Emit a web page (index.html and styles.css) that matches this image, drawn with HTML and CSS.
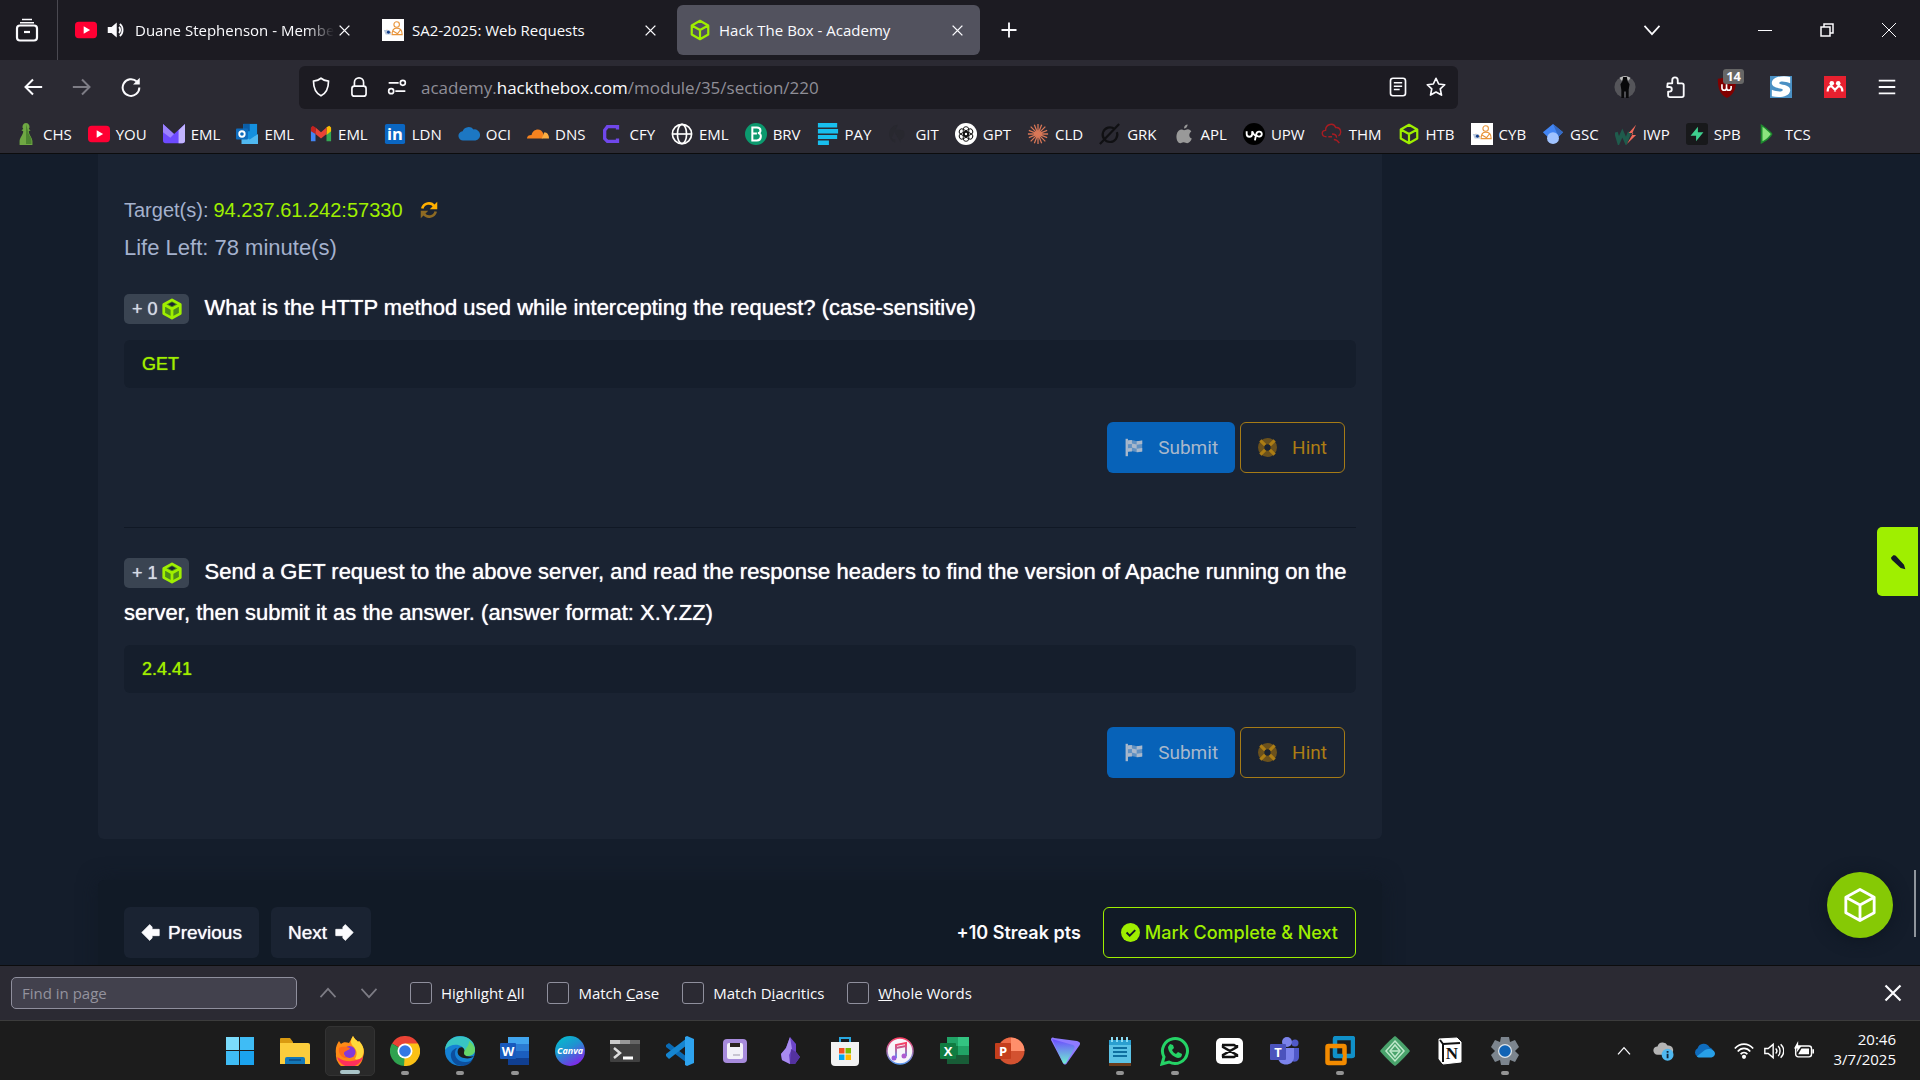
FILE: index.html
```html
<!DOCTYPE html>
<html lang="en">
<head>
  <meta charset="UTF-8">
  <meta name="viewport" content="width=device-width, initial-scale=1">
  <title>Hack The Box - Academy</title>
  <link rel="stylesheet" href="styles.css">
</head>
<body>

  <!-- shared icons -->
  <svg class="defs" aria-hidden="true">
    <symbol id="cube" viewBox="0 0 24 24"><path d="M12 2l9 5v10l-9 5-9-5V7zM3 7l9 5 9-5M12 12v10" fill="none" stroke="currentColor" stroke-width="2.4" stroke-linejoin="round"/></symbol>
    <symbol id="cube-solid" viewBox="0 0 24 24"><path d="M12 2l9 5v10l-9 5-9-5V7z" fill="#4d8a1c"/><path d="M12 2l9 5v10l-9 5-9-5V7zM3 7l9 5 9-5M12 12v10" fill="none" stroke="#9fef00" stroke-width="3" stroke-linejoin="round"/><path d="M12 4.500l4 2.200-4 2.200-4-2.200z" fill="#1a2332"/></symbol>
    <symbol id="close" viewBox="0 0 24 24"><path d="M3 3l18 18M21 3L3 21" fill="none" stroke="currentColor" stroke-width="2.600"/></symbol>
    <symbol id="youtube" viewBox="0 0 24 24"><rect x="0" y="3" width="24" height="18" rx="4" fill="#ff0033"/><path d="M9.500 8l7 4-7 4z" fill="#fff"/></symbol>
    <symbol id="course" viewBox="0 0 24 24"><path d="M0 0h24v24H0z" fill="#fff"/><g fill="none" stroke="#e8943a" stroke-width="1.200"><circle cx="16" cy="6" r="3"/><path d="M11 17c0-5 2-7 5-7s6 2 6 7zM12 13l5 3M20 12l-3 4M5 12l5 3"/></g><path d="M2 12h6l2 5H4z" fill="#b8c7dc"/><circle cx="7" cy="14.500" r="1.600" fill="#123e8a"/></symbol>
    <symbol id="flag" viewBox="0 0 24 24"><path d="M2 1h3v22H2z" fill="currentColor"/><path d="M5 3c6-2 10 3 18 0v14c-8 3-12-2-18 0z" fill="currentColor" opacity=".55"/><path d="M5 3l5-.5V7l6 1.300V4l7-1v4.500l-7 1v5l-6-1.500V7.500l-5 .5zM5 13l5-.5V17l-5 .5zM16 13.500l7-1V17l-7 1z" fill="currentColor"/></symbol>
    <symbol id="lifebuoy" viewBox="0 0 24 24"><circle cx="12" cy="12" r="8" fill="none" stroke="#6b511c" stroke-width="8"/><path d="M3 3l6 6M21 3l-6 6M3 21l6-6M21 21l-6-6" fill="none" stroke="currentColor" stroke-width="4"/></symbol>
    <symbol id="arrow" viewBox="0 0 24 24"><path d="M13 2l10 10-10 10-3-3V16H1V8h9V5z" fill="currentColor" stroke="currentColor" stroke-linejoin="round"/></symbol>
    <symbol id="chevron" viewBox="0 0 24 24"><path d="M3 7l9 10 9-10" fill="none" stroke="currentColor" stroke-width="2"/></symbol>
  </svg>

  <header class="browser">
    <div class="tabbar">
      <button class="icon-btn sidebar-btn" aria-label="View tabs"><svg viewBox="0 0 24 24"><g fill="none" stroke="currentColor" stroke-width="2.200"><rect x="2" y="7.500" width="20" height="15" rx="3"/><path d="M5 4.800h14M7 1.500h10" stroke-width="1.600"/><path d="M9 14h6"/></g></svg></button>
      <div class="tabs">
        <div class="tab">
          <svg class="fav"><use href="#youtube"/></svg>
          <svg class="sound" viewBox="0 0 24 24"><path d="M1 8h5l7-6v20l-7-6H1z" fill="currentColor"/><path d="M16 8c2 2 2 6 0 8M17 4c5 3 5 13 0 16" fill="none" stroke="currentColor" stroke-width="2.400"/></svg>
          <span class="tab-title fade">Duane Stephenson - Membe</span>
          <button class="icon-btn tab-close" aria-label="Close tab"><svg><use href="#close"/></svg></button>
        </div>
        <div class="tab">
          <svg class="fav"><use href="#course"/></svg>
          <span class="tab-title">SA2-2025: Web Requests</span>
          <button class="icon-btn tab-close" aria-label="Close tab"><svg><use href="#close"/></svg></button>
        </div>
        <div class="tab active">
          <svg class="fav lime"><use href="#cube"/></svg>
          <span class="tab-title">Hack The Box - Academy</span>
          <button class="icon-btn tab-close" aria-label="Close tab"><svg><use href="#close"/></svg></button>
        </div>
      </div>
      <button class="icon-btn new-tab" aria-label="New tab"><svg viewBox="0 0 24 24"><path d="M12 3v18M3 12h18" fill="none" stroke="currentColor" stroke-width="2.200"/></svg></button>
      <button class="icon-btn list-tabs" aria-label="List all tabs"><svg><use href="#chevron"/></svg></button>
      <div class="window-btns">
        <button class="icon-btn" aria-label="Minimize"><svg viewBox="0 0 14 14"><path d="M0 7.500h14" stroke="currentColor"/></svg></button>
        <button class="icon-btn" aria-label="Restore"><svg viewBox="0 0 14 14"><path d="M1 4h9v9H1zM4 4V1h9v9h-3" fill="none" stroke="currentColor" stroke-width="1.500"/></svg></button>
        <button class="icon-btn" aria-label="Close"><svg viewBox="0 0 14 14"><path d="M0 0l14 14M14 0L0 14" stroke="currentColor"/></svg></button>
      </div>
    </div>

    <div class="toolbar">
      <div class="nav-btns">
        <button class="icon-btn" aria-label="Back"><svg viewBox="0 0 24 24"><path d="M23 12H3M12 3l-9 9 9 9" fill="none" stroke="currentColor" stroke-width="2.400"/></svg></button>
        <button class="icon-btn dim" aria-label="Forward"><svg viewBox="0 0 24 24"><path d="M1 12h20M12 3l9 9-9 9" fill="none" stroke="currentColor" stroke-width="2.400"/></svg></button>
        <button class="icon-btn" aria-label="Reload"><svg viewBox="0 0 24 24"><path d="M19 5.500A10 10 0 1 0 22 12.500" fill="none" stroke="currentColor" stroke-width="2.400"/><path d="M22.500 1v8h-8z" fill="currentColor"/></svg></button>
      </div>
      <div class="urlbar">
        <svg viewBox="0 0 24 24"><path d="M12 1.500c3 2.500 6 3 9 3.500 0 8-2 14-9 17.500C5 19 3 13 3 5c3-.5 6-1 9-3.500z" fill="none" stroke="currentColor" stroke-width="2"/></svg>
        <svg viewBox="0 0 24 24"><rect x="3.500" y="11" width="17" height="12" rx="3" fill="none" stroke="currentColor" stroke-width="2"/><path d="M6.500 11V6.500a5.500 5.500 0 0 1 11 0V11" fill="none" stroke="currentColor" stroke-width="2"/></svg>
        <svg viewBox="0 0 24 24"><g fill="none" stroke="currentColor" stroke-width="2"><circle cx="19" cy="7" r="3"/><circle cx="5" cy="17" r="3"/><path d="M2 7h12M10 17h12"/></g></svg>
        <a class="url" href="#">academy.<b>hackthebox.com</b>/module/35/section/220</a>
        <svg viewBox="0 0 24 24"><rect x="3" y="1.500" width="18" height="21" rx="3" fill="none" stroke="currentColor" stroke-width="2"/><path d="M7 7h10M7 11h10M7 15h7" stroke="currentColor" stroke-width="1.800"/></svg>
        <svg viewBox="0 0 24 24"><path d="M12 1.500l3.200 6.900 7.300.9-5.400 5 1.500 7.400L12 18l-6.600 3.700 1.500-7.400-5.400-5 7.300-.9z" fill="none" stroke="currentColor" stroke-width="2" stroke-linejoin="round"/></svg>
      </div>
      <div class="extensions">
        <button class="icon-btn" aria-label="Account"><svg viewBox="0 0 24 24"><circle cx="12" cy="12" r="11.500" fill="#55555a"/><path d="M6 2a11 11 0 0 1 12 0l-2 3H8z" fill="#bbb"/><path d="M10 1h4l1 5 2 3-1 6v9h-3v-7h-2v7H8v-9L7 9l2-3z" fill="#08080a"/></svg></button>
        <button class="icon-btn" aria-label="Extensions"><svg viewBox="0 0 24 24"><path d="M4 8h5V4.500a3 3 0 0 1 6 0V8h4.500a2 2 0 0 1 2 2v11a2 2 0 0 1-2 2h-13a2 2 0 0 1-2-2v-4H6a2.500 2.500 0 0 0 0-5H3.500z" fill="none" stroke="currentColor" stroke-width="2" stroke-linejoin="round"/></svg></button>
        <button class="icon-btn addon" aria-label="uBlock"><svg viewBox="0 0 24 24"><path d="M12 0c3 2 7 3 10 3 0 10-2 17-10 21C4 20 2 13 2 3c3 0 7-1 10-3z" fill="#800000"/><path d="M6.500 9v4a2.500 2.500 0 0 0 5 0V9v4a2.500 2.500 0 0 0 5 0v-2" fill="none" stroke="#fff" stroke-width="1.800"/></svg><span class="badge">14</span></button>
        <button class="icon-btn addon" aria-label="Scribbr"><svg viewBox="0 0 24 24"><path d="M0 0h24v24H0z" fill="#4a90c4"/><path d="M22 1v7c-5-2-12-3-12 0 0 2 13 1 12 8-1 7-12 8-20 6v-7c5 2 12 3 12 0 0-2-13-1-12-8C3 1 13-1 22 1z" fill="#fff"/></svg></button>
        <button class="icon-btn addon" aria-label="Mendeley"><svg viewBox="0 0 24 24"><path d="M0 0h24v24H0z" fill="#e8202f"/><circle cx="8.500" cy="8" r="2.500" fill="#fff"/><circle cx="15.500" cy="8" r="2.500" fill="#fff"/><path d="M4 17c0-4 1-6 4-6l4 4 4-4c3 0 4 2 4 6M12 13v4" fill="none" stroke="#fff" stroke-width="2.400"/></svg></button>
        <button class="icon-btn" aria-label="Menu"><svg viewBox="0 0 24 24"><path d="M3 5h18M3 12h18M3 19h18" stroke="currentColor" stroke-width="2"/></svg></button>
      </div>
    </div>

    <nav class="bookmarks">
      <a href="#"><svg viewBox="0 0 24 24"><path d="M12 0a4 4 0 0 1 3 6.500l2 1.500-2 1c0 4 4 7 4 11v4H5v-4c0-4 4-7 4-11L7 8l2-1.500A4 4 0 0 1 12 0z" fill="#6fa843"/><path d="M12 1v22h6v-4c0-4-4-6-4-11z" fill="#4c8430"/></svg>CHS</a>
      <a href="#"><svg><use href="#youtube"/></svg>YOU</a>
      <a href="#"><svg viewBox="0 0 24 24"><path d="M0 1l12 11L24 1v18a3 3 0 0 1-3 3H3a3 3 0 0 1-3-3z" fill="#6d4aff"/><path d="M24 1v18a3 3 0 0 1-3 3h-4V8z" fill="#c3b5ff"/><path d="M0 1l12 11-4 4-8-6z" fill="#9c82ff"/></svg>EML</a>
      <a href="#"><svg viewBox="0 0 24 24"><path d="M8 1h15v21H8z" fill="#1490df"/><path d="M8 1h7v8H8z" fill="#0a5ea8"/><path d="M6 13l9 5 9-6v11H6z" fill="#50b8f0"/><rect y="6" width="13" height="12" rx="1" fill="#0f6cbd"/><circle cx="6.500" cy="12" r="3" fill="none" stroke="#fff" stroke-width="2"/></svg>EML</a>
      <a href="#"><svg viewBox="0 0 24 24"><path d="M1 6v14h5V9z" fill="#4285f4"/><path d="M23 6v14h-5V9z" fill="#34a853"/><path d="M18 4.500l3-1.500 2 2v4l-5 4z" fill="#fbbc04"/><path d="M6 5l6 5 6-5v7l-6 5-6-5z" fill="#ea4335"/><path d="M1 5l2-2 3 2v7L1 9z" fill="#c5221f"/></svg>EML</a>
      <a href="#"><svg viewBox="0 0 24 24"><rect x="1" y="1" width="22" height="22" rx="2" fill="#0a66c2"/><text x="12" y="19" text-anchor="middle" font-size="18" font-weight="700" fill="#fff">in</text></svg>LDN</a>
      <a href="#"><svg viewBox="0 0 24 24"><path d="M6 19a5 5 0 0 1-1-10 7 7 0 0 1 12-2 6 6 0 0 1 2 12z" fill="#1c77c3"/></svg>OCI</a>
      <a href="#"><svg viewBox="0 0 24 24"><path d="M0 17c0-3 2-4 5-4 1-6 10-9 13-1l-1 5z" fill="#f6821f"/><path d="M16 17l3-7c3 0 5 3 5 7z" fill="#fbad41"/></svg>DNS</a>
      <a href="#"><svg viewBox="0 0 24 24"><path d="M18 7V4H7L4 8v9l3 3h11v-3" fill="none" stroke="#7047eb" stroke-width="3.600"/></svg>CFY</a>
      <a href="#"><svg viewBox="0 0 24 24"><g fill="none" stroke="#fff" stroke-width="1.800"><circle cx="12" cy="12" r="10.500"/><ellipse cx="12" cy="12" rx="5" ry="10.500"/><path d="M1.500 12h21"/></g></svg>EML</a>
      <a href="#"><svg viewBox="0 0 24 24"><circle cx="12" cy="12" r="12" fill="#0b996e"/><path d="M8 5h5c5 0 5 6 1 6 5 0 4 8-1 8H8zM8 11.500h5" fill="none" stroke="#fff" stroke-width="2.200"/></svg>BRV</a>
      <a href="#"><svg viewBox="0 0 24 24"><path d="M1 0h21v5H1zM1 6.500h22v5H1zM1 13h21v4.500H1zM1 19h12v5H1z" fill="#18bfee"/></svg>PAY</a>
      <a href="#"><svg viewBox="0 0 24 24"><path d="M12 2a10 10 0 0 0-3 19.500V18c-3 .5-4-2-4-2M15 21.500V18c5-1 5-9 2-10-3-1-7-1-10 0" fill="#28282f"/></svg>GIT</a>
      <a href="#"><svg viewBox="0 0 24 24"><circle cx="12" cy="12" r="12" fill="#fff"/><g fill="none" stroke="#111" stroke-width="1"><rect x="9" y="4" width="6" height="10" rx="3"/><rect x="9" y="4" width="6" height="10" rx="3" transform="rotate(60 12 12)"/><rect x="9" y="4" width="6" height="10" rx="3" transform="rotate(120 12 12)"/><rect x="9" y="4" width="6" height="10" rx="3" transform="rotate(180 12 12)"/><rect x="9" y="4" width="6" height="10" rx="3" transform="rotate(240 12 12)"/><rect x="9" y="4" width="6" height="10" rx="3" transform="rotate(300 12 12)"/></g></svg>GPT</a>
      <a href="#"><svg viewBox="0 0 24 24"><path d="M12 1v22M1 12h22M4 4l16 16M20 4L4 20M8 2l8 20M2 8l20 8M22 8L2 16M16 2L8 22" stroke="#d97757" stroke-width="1.400"/></svg>CLD</a>
      <a href="#"><svg viewBox="0 0 24 24"><path d="M17 6.500A8 8 0 1 0 19.500 10M1 23L22 1" fill="none" stroke="#101013" stroke-width="2.400"/></svg>GRK</a>
      <a href="#"><svg viewBox="0 0 24 24"><path d="M12 8c2 0 3-1.500 5-1 1.500 0 2 1 3 2-3 2.500-3 6.500.5 8-1 3-3 5-5 5-1.500 0-2-1-4-1s-2 1-3.500 1C5 22 3 17 4 12.500 5 8 9 6 12 8zM12 6c0-3 2-4.500 4-4.500 0 2.500-2 4.500-4 4.500z" fill="#999"/></svg>APL</a>
      <a href="#"><svg viewBox="0 0 24 24"><circle cx="12" cy="12" r="12" fill="#000"/><path d="M4 9v3a3 3 0 0 0 6 0V9c1 3 3 5 5 6M13 19l1.500-7c1-4 6-3 6 0s-4 4-6 1" fill="none" stroke="#fff" stroke-width="2"/></svg>UPW</a>
      <a href="#"><svg viewBox="0 0 24 24"><path d="M6 15c-6 0-6-7-1-7 0-7 9-9 11-3 6-1 7 7 3 9M12 12c3 0 5 1 5 4M14 18c3 0 4 1 6 4M8 15h4" fill="none" stroke="#a81c22" stroke-width="1.500"/></svg>THM</a>
      <a href="#"><svg class="lime"><use href="#cube"/></svg>HTB</a>
      <a href="#"><svg><use href="#course"/></svg>CYB</a>
      <a href="#"><svg viewBox="0 0 24 24"><path d="M12 1l11 9-5 5H6l-5-5z" fill="#4285f4"/><path d="M12 1l11 9-5 5z" fill="#356ac3"/><circle cx="12" cy="16.500" r="6.500" fill="#a0c3ff"/></svg>GSC</a>
      <a href="#"><svg viewBox="0 0 24 24"><path d="M1 10l3 10 4-9 4 9 4-10" fill="none" stroke="#1f5b4c" stroke-width="4"/><path d="M23 2l-8 9h5l-7 12 10-10h-5z" fill="#f26a5a"/></svg>IWP</a>
      <a href="#"><svg viewBox="0 0 24 24"><rect width="24" height="24" rx="3" fill="#18191b"/><path d="M13 4v6h6l-8 10v-6H5z" fill="#3ecf8e"/></svg>SPB</a>
      <a href="#"><svg viewBox="0 0 24 24"><path d="M4 1c6 4 11 8 13 11-2 4-7 8-13 11z" fill="#1d8a2e"/><path d="M6 4c4 3 7 6 9 8-2 3-5 6-9 8z" fill="#8be37e"/></svg>TCS</a>
    </nav>
  </header>

  <main class="page">
    <section class="card questions">
      <p class="target">Target(s): <a href="#">94.237.61.242:57330</a>
        <svg viewBox="0 0 24 24"><path d="M3 10a9 9 0 0 1 16-3" fill="none" stroke="#ffaf00" stroke-width="3.500"/><path d="M23 1v10H13z" fill="#ffaf00"/><path d="M21 14a9 9 0 0 1-16 3" fill="none" stroke="#8d6a23" stroke-width="3.500"/><path d="M1 23V13h10z" fill="#8d6a23"/></svg></p>
      <p class="target life">Life Left: 78 minute(s)</p>

      <form class="question">
        <label for="answer1"><span class="points">+ 0<svg><use href="#cube-solid"/></svg></span>What is the HTTP method used while intercepting the request? (case-sensitive)</label>
        <input id="answer1" type="text" value="GET">
        <div class="actions">
          <button type="button" class="btn submit"><svg><use href="#flag"/></svg>Submit</button>
          <button type="button" class="btn hint"><svg><use href="#lifebuoy"/></svg>Hint</button>
        </div>
      </form>
      <hr>
      <form class="question">
        <label for="answer2"><span class="points">+ 1<svg><use href="#cube-solid"/></svg></span>Send a GET request to the above server, and read the response headers to find the version of Apache running on the server, then submit it as the answer. (answer format: X.Y.ZZ)</label>
        <input id="answer2" type="text" value="2.4.41">
        <div class="actions">
          <button type="button" class="btn submit"><svg><use href="#flag"/></svg>Submit</button>
          <button type="button" class="btn hint"><svg><use href="#lifebuoy"/></svg>Hint</button>
        </div>
      </form>
    </section>

    <section class="card pager">
      <button class="btn step"><svg class="flip"><use href="#arrow"/></svg>Previous</button>
      <button class="btn step">Next<svg><use href="#arrow"/></svg></button>
      <strong class="streak">+10 Streak pts</strong>
      <button class="btn complete"><svg viewBox="0 0 24 24"><circle cx="12" cy="12" r="12" fill="#9fef00"/><path d="M7 12l4 4 7-7" fill="none" stroke="#111927" stroke-width="2.400"/></svg>Mark Complete &amp; Next</button>
    </section>

    <button class="edit-tab" aria-label="Notes"><svg viewBox="0 0 24 24"><path d="M2 5l3-3c3-1 4 1 5 2l11 12 2 7-7-2L3 9C2 8 1 6 2 5z" fill="#111927"/></svg></button>
    <button class="fab" aria-label="Open menu"><svg viewBox="0 0 24 24"><path d="M12 1l10 5.500v11L12 23 2 17.500v-11zM2 6.500L12 12l10-5.500M12 12v11" fill="none" stroke="#fff" stroke-width="2" stroke-linejoin="round"/></svg></button>
    <div class="scroll-thumb"></div>
  </main>

  <div class="findbar">
    <input class="find-input" type="text" placeholder="Find in page" aria-label="Find in page">
    <button class="icon-btn find-step dim" aria-label="Previous match"><svg class="up"><use href="#chevron"/></svg></button>
    <button class="icon-btn find-step dim" aria-label="Next match"><svg><use href="#chevron"/></svg></button>
    <div class="find-options">
      <label><input type="checkbox"><span>Highlight <u>A</u>ll</span></label>
      <label><input type="checkbox"><span>Match <u>C</u>ase</span></label>
      <label><input type="checkbox"><span>Match D<u>i</u>acritics</span></label>
      <label><input type="checkbox"><span><u>W</u>hole Words</span></label>
    </div>
    <button class="icon-btn find-close" aria-label="Close find bar"><svg><use href="#close"/></svg></button>
  </div>

  <footer class="taskbar">
    <div class="apps">
      <button class="app" aria-label="Start"><svg viewBox="0 0 30 30"><path d="M1 1h13v13H1zM15 1h14v13H15zM1 15h13v14H1zM15 15h14v14H15z" fill="#3fbcf5"/><path d="M1 1h13v13H1z" fill="#7bdcfb"/><path d="M15 15h14v14H15z" fill="#1ba3ee"/></svg></button>
      <button class="app" aria-label="Explorer"><svg viewBox="0 0 30 30"><path d="M0 3a1 1 0 0 1 1-1h9l3 4v4H0z" fill="#d99a11"/><path d="M0 7h28a2 2 0 0 1 2 2v19H0z" fill="#fccd3c"/><path d="M5 28v-5a2 2 0 0 1 2-2h16a2 2 0 0 1 2 2v5z" fill="#1478b8"/><path d="M9 24h12" stroke="#0c4a80" stroke-width="1.500"/></svg></button>
      <button class="app current" aria-label="Firefox"><svg viewBox="0 0 30 30"><path d="M18 0c2 4 4 4 5 6l1-1c5 5 6 11 4 16a13.500 13.500 0 0 1-27-3C0 12 2 8 4 5l2 3c2-2 5-2 8-1z" fill="#ff8a16"/><path d="M18 0c2 4 4 4 5 6l1-1c5 5 6 11 3 16-2 3-5 3-7 2 4-7 0-11-3-14-2-3-1-6 1-9z" fill="#ffd93b"/><path d="M2 21a13.500 13.500 0 0 0 26 0c-7 5-18 6-26 0z" fill="#ff2f5c"/><circle cx="14.500" cy="16" r="6" fill="#8338d8"/><path d="M4 12c4-2 7-1 11 0-1 3-5 2-6 5-1 2 1 4 4 5-6 1-10-4-9-10z" fill="#ff6a1a"/></svg></button>
      <button class="app open" aria-label="Chrome"><svg viewBox="0 0 30 30"><path d="M15 15L2 7.500a15 15 0 0 1 26 0z" fill="#ea4335"/><path d="M15 15L2 7.500A15 15 0 0 0 15 30l6-11z" fill="#2fa24f"/><path d="M15 15l-1 15A15 15 0 0 0 28 7.500H15z" fill="#fbc116"/><circle cx="15" cy="15" r="7.500" fill="#fff"/><circle cx="15" cy="15" r="5.800" fill="#3478e5"/></svg></button>
      <button class="app open" aria-label="Edge"><svg viewBox="0 0 30 30"><circle cx="15" cy="15" r="15" fill="#1581d4"/><path d="M0 14C1-4 29-4 30 13c0 5-4 7-8 7-5 0-5-3-3-5 1-6-12-10-19-1z" fill="#38c6c3"/><path d="M24 5c4 3 6 6 6 9 0 5-5 6-9 6-3-1-3-3-2-5 2-3 5-5 5-10z" fill="#65d66a"/><path d="M12 12c-5 6 0 15 9 14 3 0 5-1 7-3-4 9-17 9-21 1-3-6 0-11 5-12z" fill="#0c4f9e"/><path d="M14 12c-3 4-1 9 5 10 4 1 8 0 10-2-3 1-10 1-10-3 0-2 1-2 0-4-1-2-3-2-5-1z" fill="#1c1c1c"/></svg></button>
      <button class="app open" aria-label="Word"><svg viewBox="0 0 30 30"><path d="M8 1h21v28H8z" fill="#1b5ebe"/><path d="M8 1h21v7H8z" fill="#41a5ee"/><path d="M8 8h21v7H8z" fill="#2b7cd3"/><path d="M8 22h21v7H8z" fill="#103f91"/><rect y="7" width="16" height="16" rx="1" fill="#185abd"/><text x="8" y="20" text-anchor="middle" font-size="13" font-weight="700" fill="#fff">W</text></svg></button>
      <button class="app" aria-label="Canva"><svg viewBox="0 0 30 30"><defs><linearGradient id="canva" x1="0" y1="0" x2=".6" y2="1"><stop offset="0" stop-color="#00c4cc"/><stop offset=".5" stop-color="#1f93d0"/><stop offset="1" stop-color="#7d2ae8"/></linearGradient></defs><circle cx="15" cy="15" r="15" fill="url(#canva)"/><text x="15" y="18" text-anchor="middle" font-size="9" font-style="italic" font-weight="700" fill="#fff">Canva</text></svg></button>
      <button class="app" aria-label="Terminal"><svg viewBox="0 0 30 30"><rect y="4" width="30" height="22" rx="1" fill="#404040"/><path d="M0 4h20v4H0z" fill="#ccc"/><path d="M10 4h10v4H10z" fill="#999"/><path d="M20 4h10v4H20z" fill="#666"/><path d="M4 12l6 5-6 5" fill="none" stroke="#ddd" stroke-width="2.500"/><path d="M13 22h10" stroke="#fff" stroke-width="3"/></svg></button>
      <button class="app" aria-label="Code"><svg viewBox="0 0 30 30"><path d="M1 9l3-2 18 14v6L1 11z" fill="#0a6bb5"/><path d="M1 20l3 3L22 9V2L1 18z" fill="#1585d0"/><path d="M22 0l7 3v24l-7 3-2-1V1z" fill="#2ea3ee"/></svg></button>
      <button class="app" aria-label="Disk tool"><svg viewBox="0 0 30 30"><rect x="3" y="3" width="24" height="24" rx="4" fill="#a78bdc"/><rect x="7" y="7" width="16" height="16" rx="2" fill="#f2f0f8"/><path d="M10 7h10v4H10z" fill="#2b2320"/><path d="M13 19h7" stroke="#c8c4d2" stroke-width="2"/></svg></button>
      <button class="app" aria-label="Obsidian"><svg viewBox="0 0 30 30"><path d="M15 1l6 7v8l4 5-5 7h-5l-8-4-1-6 5-6z" fill="#6c45c9"/><path d="M15 1l2 12-3 6 1 9-8-4-1-6 5-6z" fill="#a88bf0"/><path d="M16 13l5 3 4 5-5 7h-5z" fill="#54329f"/></svg></button>
      <button class="app" aria-label="Store"><svg viewBox="0 0 30 30"><path d="M10 7V2h10v5" fill="none" stroke="#29a8e0" stroke-width="2"/><path d="M1 6h28v20a4 4 0 0 1-4 4H5a4 4 0 0 1-4-4z" fill="#f2f2f2"/><path d="M9 12h5.500v5.500H9z" fill="#f25022"/><path d="M15.500 12H21v5.500h-5.500z" fill="#7fba00"/><path d="M9 18.500h5.500V24H9z" fill="#00a4ef"/><path d="M15.500 18.500H21V24h-5.500z" fill="#ffb900"/></svg></button>
      <button class="app" aria-label="Music"><svg viewBox="0 0 30 30"><defs><linearGradient id="music" x1="0" y1="0" x2="0" y2="1"><stop offset="0" stop-color="#fa3e62"/><stop offset="1" stop-color="#5b9cf5"/></linearGradient></defs><circle cx="15" cy="15" r="13" fill="#f7f5fa" stroke="url(#music)" stroke-width="1.500"/><path d="M11 22V9l10-2v13M11 12l10-2" fill="none" stroke="url(#music)" stroke-width="2"/><circle cx="9" cy="22" r="2.500" fill="#9a5be0"/><circle cx="19" cy="20" r="2.500" fill="#b05bd0"/></svg></button>
      <button class="app" aria-label="Excel"><svg viewBox="0 0 30 30"><path d="M7 1h22v27H7z" fill="#21a366"/><path d="M18 1h11v9H18z" fill="#33c481"/><path d="M7 10h11v9H7z" fill="#107c41"/><path d="M7 19h22v9H7z" fill="#185c37"/><rect y="7" width="16" height="16" rx="1" fill="#107c41"/><text x="8" y="20" text-anchor="middle" font-size="13" font-weight="700" fill="#fff">X</text></svg></button>
      <button class="app" aria-label="PowerPoint"><svg viewBox="0 0 30 30"><circle cx="16" cy="15" r="13.500" fill="#d35230"/><path d="M16 1.500A13.500 13.500 0 0 1 29.500 15H16z" fill="#ff8f6b"/><path d="M16 1.500V15H3A13.500 13.500 0 0 1 16 1.500z" fill="#ed6c47"/><rect y="7" width="16" height="16" rx="1" fill="#c43e1c"/><text x="8" y="20" text-anchor="middle" font-size="13" font-weight="700" fill="#fff">P</text></svg></button>
      <button class="app" aria-label="VPN"><svg viewBox="0 0 30 30"><defs><linearGradient id="vpn" x1="0" y1="0" x2="0" y2="1"><stop offset="0" stop-color="#6d4aff"/><stop offset="1" stop-color="#6ff0d0"/></linearGradient></defs><path d="M1 4c0-2 1-3 3-2l23 3c3 1 4 2 2 5L17 27c-1 2-3 2-4 0z" fill="#8f7bff"/><path d="M2 3l21 6c2 1 2 2 1 4l-8 14c-1 1-2 1-3 0z" fill="url(#vpn)"/></svg></button>
      <button class="app open" aria-label="Notepad"><svg viewBox="0 0 30 30"><path d="M4 27h22v3H4z" fill="#6b3c1c"/><path d="M4 4h22v23H4z" fill="#5cc3e6"/><path d="M4 4h22v5H4z" fill="#2b9fd0"/><path d="M7 1v5M12 1v5M17 1v5M22 1v5" stroke="#8adcf5" stroke-width="2"/><path d="M8 12h14M8 16h14M8 20h14" stroke="#0e6fa0" stroke-width="2"/></svg></button>
      <button class="app open" aria-label="WhatsApp"><svg viewBox="0 0 30 30"><path d="M2 28l2-7A12.500 12.500 0 1 1 9 26z" fill="none" stroke="#25d366" stroke-width="3"/><path d="M10 8l3 1 1 3-2 2c1 2 2 3 4 4l2-2 4 2c0 3-2 4-4 4-5-1-10-6-10-11z" fill="#25d366"/></svg></button>
      <button class="app" aria-label="CapCut"><svg viewBox="0 0 30 30"><rect x="1" y="2" width="27" height="26" rx="5" fill="#fff"/><path d="M7 9h12l3 2M7 21h12l3-2M22 9v2L8 19v2M8 9v2l14 8v2" fill="none" stroke="#111" stroke-width="2.400"/></svg></button>
      <button class="app" aria-label="Teams"><svg viewBox="0 0 30 30"><circle cx="25" cy="7" r="3.500" fill="#5059c9"/><circle cx="17" cy="6" r="5" fill="#7b83eb"/><path d="M21 12h8v9c0 5-6 6-8 3z" fill="#5059c9"/><path d="M8 12h16v9c0 10-16 10-16 0z" fill="#7b83eb"/><rect y="8" width="16" height="16" rx="1" fill="#4b53bc"/><text x="8" y="21" text-anchor="middle" font-size="13" font-weight="700" fill="#fff">T</text></svg></button>
      <button class="app open" aria-label="VMware"><svg viewBox="0 0 30 30"><rect x="10" y="2" width="18" height="18" rx="1" fill="none" stroke="#1090c8" stroke-width="4.500"/><rect x="2.500" y="10" width="17" height="17" rx="1" fill="none" stroke="#f38b00" stroke-width="4.500"/><path d="M10 15v5h8" fill="none" stroke="#1090c8" stroke-width="3"/></svg></button>
      <button class="app" aria-label="Diamond app"><svg viewBox="0 0 30 30"><path d="M15 0c3 2 12 11 15 15-3 4-12 13-15 15C12 28 3 19 0 15 3 11 12 2 15 0z" fill="#4aa36c"/><path d="M15 5l9 10-9 10-9-10zM15 9l5 6-5 6-5-6z" fill="none" stroke="#bfe8cb" stroke-width="1.500"/><path d="M11 15h8" stroke="#bfe8cb" stroke-width="1.500"/></svg></button>
      <button class="app" aria-label="Notion"><svg viewBox="0 0 30 30"><path d="M4 3l18-1 4 4v20l-18 2-4-5z" fill="#fff" stroke="#fff" stroke-linejoin="round"/><path d="M5 4l3 4v18M8 8l17-1" fill="none" stroke="#111" stroke-width="2"/><text class="serif" x="17" y="23" text-anchor="middle" font-size="17" font-weight="700" fill="#111">N</text></svg></button>
      <button class="app open" aria-label="Settings"><svg viewBox="0 0 30 30"><path d="M11 1h8l1 5 5-2 4 7-4 4 4 4-4 7-5-2-1 5h-8l-1-5-5 2-4-7 4-4-4-4 4-7 5 2z" fill="#7c858e"/><circle cx="15" cy="15" r="7" fill="#dfe6ec"/><circle cx="15" cy="15" r="5.800" fill="#1063b5"/></svg></button>
    </div>
    <div class="tray">
      <svg class="up small"><use href="#chevron"/></svg>
      <svg class="wide" viewBox="0 0 24 24"><path d="M6 16a4.500 4.500 0 0 1 0-9 6 6 0 0 1 11-1 5 5 0 0 1 2 10z" fill="#b4b4b4"/><circle cx="17" cy="16" r="6.500" fill="#4fb8f0"/><path d="M17 15v5M17 12v2" stroke="#10263a" stroke-width="2"/></svg>
      <svg class="wide" viewBox="0 0 24 24"><path d="M5 18a5 5 0 0 1 0-9 7 7 0 0 1 13-1 5.500 5.500 0 0 1 1 10z" fill="#0f6cbd"/><path d="M4 18l9-7c5-3 11 0 11 4 0 2-2 4-4 4H6z" fill="#28a0e8"/></svg>
      <div class="status">
        <svg viewBox="0 0 24 24"><g fill="none" stroke="#fff" stroke-width="2"><path d="M1 9c6-7 16-7 22 0M4.500 12.500c4-5 11-5 15 0M8 16c2-3 6-3 8 0"/></g><circle cx="12" cy="19" r="2.500" fill="#fff"/></svg>
        <svg viewBox="0 0 24 24"><path d="M1 9h4l6-5v16l-6-5H1zM14 9c2 2 2 4 0 6M17 6c3 3 3 9 0 12M20 4c5 5 5 11 0 16" fill="none" stroke="#fff" stroke-width="1.700"/></svg>
        <svg viewBox="0 0 24 24"><rect x="2" y="6" width="19" height="13" rx="3" fill="none" stroke="#fff" stroke-width="1.700"/><path d="M9 9h9v7H5z" fill="#fff"/><path d="M22 10h2v5h-2zM5 0L0 9h4l-1 5 6-8H5z" fill="#fff"/></svg>
      </div>
      <time class="clock">20:46<br>3/7/2025</time>
    </div>
  </footer>

</body>
</html>
```
FILE: styles.css
```css
* {
  box-sizing: border-box;
}
body {
  margin: 0;
  height: 100vh;
  display: flex;
  flex-direction: column;
  overflow: hidden;
  background: #141d2b;
  color: #fbfbfe;
  font-family: "Open Sans", "Noto Sans", sans-serif;
  font-size: 15px;
}
button, input {
  font: inherit;
  color: inherit;
}
button {
  border: 0;
  padding: 0;
  background: none;
}
a {
  color: inherit;
  text-decoration: none;
}
svg {
  display: block;
  flex: none;
}
.defs {
  position: absolute;
  width: 0;
  height: 0;
}
.lime {
  color: #9fef00;
}
.dim {
  color: #7d7c85;
}
.up {
  transform: rotate(180deg);
}
.flip {
  transform: scaleX(-1);
}
.icon-btn {
  display: flex;
  align-items: center;
  justify-content: center;
}

/* tab strip */
.tabbar {
  display: flex;
  align-items: center;
  height: 60px;
  background: #1c1b22;
}
.sidebar-btn {
  width: 58px;
  height: 60px;
  border-right: 1px solid #4a4951;
  padding-right: 4px;
}
.sidebar-btn svg {
  width: 24px;
  height: 24px;
}
.tabs {
  display: flex;
  gap: 4px;
  margin-left: 5px;
}
.tab {
  display: flex;
  align-items: center;
  width: 303px;
  height: 50px;
  padding: 0 12px;
  border-radius: 6px;
}
.tab.active {
  background: #52525e;
}
.fav {
  width: 22px;
  height: 22px;
  margin-right: 8px;
}
.sound {
  width: 18px;
  height: 18px;
  margin: 0 10px 0 2px;
}
.tab-title {
  flex: 1;
  white-space: nowrap;
}
.tab-title.fade {
  mask-image: linear-gradient(to right, #000 86%, transparent);
}
.tab-close {
  width: 22px;
  height: 22px;
}
.tab-close svg {
  width: 13px;
  height: 13px;
}
.new-tab {
  width: 58px;
}
.new-tab svg,
.list-tabs svg {
  width: 20px;
  height: 20px;
}
.list-tabs {
  margin-left: auto;
  width: 60px;
}
.window-btns {
  display: flex;
  margin-left: 52px;
}
.window-btns button {
  width: 62px;
  height: 60px;
}
.window-btns svg {
  width: 14px;
  height: 14px;
}

/* address bar */
.toolbar {
  display: flex;
  align-items: center;
  height: 54px;
  background: #2b2a33;
}
.nav-btns {
  display: flex;
  width: 299px;
  padding-left: 8px;
}
.nav-btns button {
  width: 49px;
}
.nav-btns svg,
.urlbar svg {
  width: 20px;
  height: 20px;
}
.urlbar {
  flex: 1;
  display: flex;
  align-items: center;
  gap: 18px;
  height: 43px;
  padding: 0 12px;
  border-radius: 6px;
  background: #1c1b22;
}
.url {
  flex: 1;
  margin-left: -4px;
  font-size: 17px;
  color: #8f8e97;
}
.url b {
  font-weight: 400;
  color: #fbfbfe;
}
.extensions {
  display: flex;
  margin-left: 142px;
  padding-right: 8px;
}
.extensions button {
  width: 50px;
  height: 40px;
}
.extensions .addon {
  position: relative;
  width: 54px;
}
.extensions svg {
  width: 22px;
  height: 22px;
}
.badge {
  position: absolute;
  top: 2px;
  right: 10px;
  padding: 0 3px;
  border-radius: 3px;
  background: #666;
  font-size: 13px;
  font-weight: 700;
  line-height: 15px;
}

/* bookmarks */
.bookmarks {
  display: flex;
  align-items: center;
  gap: 16px;
  height: 40px;
  padding-left: 15px;
  background: #2b2a33;
  border-bottom: 1px solid #0c0c0d;
}
.bookmarks a {
  display: flex;
  align-items: center;
  gap: 6px;
}
.bookmarks svg {
  width: 22px;
  height: 22px;
}

/* module page */
.page {
  position: relative;
  flex: 1;
  min-height: 0;
  overflow: hidden;
  padding: 0 538px 0 98px;
  font-family: "Liberation Sans", Arial, sans-serif;
  font-size: 20px;
}
.card {
  padding: 0 26px;
}
.questions {
  padding-top: 37px;
  padding-bottom: 61px;
  border-radius: 0 0 6px 6px;
  background: #1a2332;
}
.target {
  display: flex;
  align-items: center;
  gap: 5px;
  margin: 0;
  line-height: 38px;
  color: #a4b1cd;
}
.target a {
  color: #9fef00;
}
.target svg {
  width: 18px;
  height: 18px;
  margin-left: 12px;
}
.life {
  font-size: 22px;
}
.question {
  padding-top: 20px;
}
.question label {
  display: block;
  line-height: 41px;
  font-size: 22px;
  color: #fff;
}
.points {
  display: inline-flex;
  align-items: center;
  gap: 3px;
  height: 30px;
  margin-right: 16px;
  padding: 0 6px 0 8px;
  border-radius: 5px;
  background: #3a4452;
  color: #d5dbe5;
  font-size: 18px;
  line-height: 30px;
  vertical-align: middle;
}
.points svg {
  width: 22px;
  height: 22px;
}
.question input {
  display: block;
  width: 100%;
  height: 48px;
  margin-top: 12px;
  padding: 0 18px;
  border: 0;
  border-radius: 6px;
  background: #151e2c;
  color: #9fef00;
  font-size: 18px;
}
.question label,
.question input,
.step {
  text-shadow: 0 0 1px currentColor;
}
.actions {
  display: flex;
  justify-content: flex-end;
  gap: 5px;
  margin-top: 34px;
  padding-right: 11px;
}
.btn {
  display: flex;
  align-items: center;
  height: 51px;
  padding: 0 17px;
  border-radius: 6px;
  font-size: 19px;
}
.btn svg {
  width: 19px;
  height: 19px;
}
.actions .btn {
  font-family: Roboto, sans-serif;
}
.actions svg {
  margin-right: 15px;
}
.submit {
  background: #0762b8;
  color: #a9b8cb;
}
.hint {
  border: 1px solid #a67b16;
  color: #ac7d14;
}
hr {
  margin: 54px 0 3px;
  border: 0;
  border-top: 1px solid #101825;
}
.pager {
  display: flex;
  align-items: center;
  gap: 12px;
  margin-top: 41px;
  padding-top: 27px;
  padding-bottom: 27px;
  border-radius: 6px;
  background: #111a26;
  box-shadow: 0 0 20px #111a26;
}
.step {
  gap: 8px;
  background: #1a2332;
}
.streak {
  margin-left: auto;
  margin-right: 10px;
  font-family: Inter, sans-serif;
  font-size: 18px;
  font-weight: 600;
}
.complete {
  gap: 5px;
  border: 1px solid #9fef00;
  color: #9fef00;
  font-family: Inter, sans-serif;
  font-size: 18px;
  font-weight: 500;
}
.edit-tab {
  position: absolute;
  top: 373px;
  right: 2px;
  display: flex;
  align-items: center;
  justify-content: center;
  width: 41px;
  height: 69px;
  border-radius: 5px 0 0 5px;
  background: #9fef00;
}
.edit-tab svg {
  width: 16px;
  height: 16px;
}
.fab {
  position: absolute;
  right: 27px;
  bottom: 27px;
  display: flex;
  align-items: center;
  justify-content: center;
  width: 66px;
  height: 66px;
  border-radius: 50%;
  background: #86c905;
  box-shadow: 0 2px 16px #0e1622;
}
.fab svg {
  width: 34px;
  height: 34px;
}
.scroll-thumb {
  position: absolute;
  right: 4px;
  bottom: 28px;
  width: 2px;
  height: 67px;
  background: #8f959c;
}

/* find bar */
.findbar {
  display: flex;
  align-items: center;
  height: 55px;
  padding: 0 12px 0 11px;
  border-top: 1px solid #0c0c0d;
  background: #2b2a33;
}
.find-input {
  width: 286px;
  height: 32px;
  margin-right: 10px;
  padding: 0 10px;
  border: 1px solid #8f8f9d;
  border-radius: 5px;
  background: #42414d;
}
.find-input::placeholder {
  color: #94939e;
  opacity: 1;
}
.find-step {
  width: 41px;
}
.find-step svg {
  width: 20px;
  height: 20px;
}
.find-options {
  display: flex;
  gap: 23px;
  margin-left: 21px;
}
.find-options label {
  display: flex;
  align-items: center;
  gap: 9px;
}
.find-options input {
  appearance: none;
  width: 22px;
  height: 22px;
  margin: 0;
  border: 1px solid #8f8f9d;
  border-radius: 3px;
}
.find-close {
  width: 30px;
  margin-left: auto;
}
.find-close svg {
  width: 20px;
  height: 20px;
}

/* taskbar */
.taskbar {
  display: flex;
  align-items: center;
  justify-content: space-between;
  height: 60px;
  padding: 0 24px 0 215px;
  border-top: 1px solid #3c3c3c;
  background: #1c1c1c;
}
.apps {
  display: flex;
  gap: 5px;
}
.app {
  position: relative;
  display: flex;
  align-items: center;
  justify-content: center;
  width: 50px;
  height: 50px;
  border-radius: 5px;
}
.app svg {
  width: 30px;
  height: 30px;
}
.app text {
  font-family: "Open Sans", sans-serif;
}
.app .serif {
  font-family: "Liberation Serif", serif;
}
.app.current {
  background: #292929;
  border: 1px solid #333;
}
.app.open::after,
.app.current::after {
  content: "";
  position: absolute;
  bottom: 1px;
  width: 8px;
  height: 4px;
  border-radius: 2px;
  background: #949494;
}
.app.current::after {
  width: 20px;
  background: #a9c4c8;
}
.tray {
  display: flex;
  align-items: center;
}
.small {
  width: 16px;
  height: 16px;
  margin-right: 20px;
}
.wide {
  width: 22px;
  height: 22px;
  margin-right: 19px;
}
.status {
  display: flex;
  gap: 10px;
}
.status svg {
  width: 20px;
  height: 20px;
}
.clock {
  width: 82px;
  padding-bottom: 3px;
  line-height: 20px;
  text-align: right;
}
```
